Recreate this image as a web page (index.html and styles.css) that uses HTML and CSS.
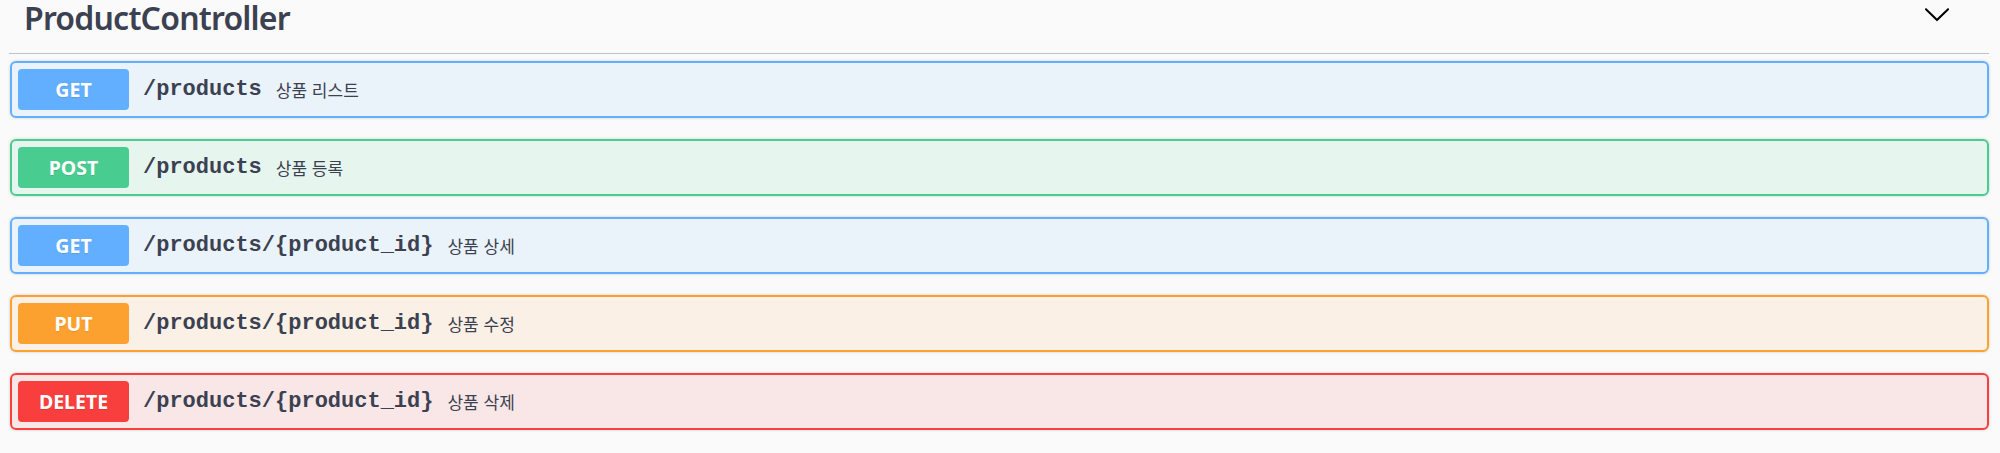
FILE: index.html
```html
<!DOCTYPE html>
<html lang="ko">
<head>
<meta charset="utf-8">
<title>ProductController</title>
<link rel="stylesheet" href="styles.css">
</head>
<body>
<section class="tag-section">
  <div class="tag-header">
    <h3 class="tag-title">ProductController</h3>
    <button class="expand" aria-label="collapse">
      <svg width="28" height="28" viewBox="0 0 20 20"><path d="M17.418 6.109c.272-.268.709-.268.979 0s.271.701 0 .969l-7.908 7.830c-.27.268-.707.268-.979 0l-7.908-7.830c-.27-.268-.27-.701 0-.969.271-.268.709-.268.979 0L10 13.25l7.418-7.141z"/></svg>
    </button>
  </div>
  <div class="ops">
    <div class="op op-get">
      <span class="method">GET</span>
      <span class="path">/products</span>
      <span class="desc">상품 리스트</span>
    </div>
    <div class="op op-post">
      <span class="method">POST</span>
      <span class="path">/products</span>
      <span class="desc">상품 등록</span>
    </div>
    <div class="op op-get">
      <span class="method">GET</span>
      <span class="path">/products/{product_id}</span>
      <span class="desc">상품 상세</span>
    </div>
    <div class="op op-put">
      <span class="method">PUT</span>
      <span class="path">/products/{product_id}</span>
      <span class="desc">상품 수정</span>
    </div>
    <div class="op op-delete">
      <span class="method">DELETE</span>
      <span class="path">/products/{product_id}</span>
      <span class="desc">상품 삭제</span>
    </div>
  </div>
</section>
</body>
</html>
```
FILE: styles.css
```css
html, body {
  margin: 0;
  padding: 0;
  background: #fafafa;
}
body {
  font-family: "Noto Sans", "Noto Sans CJK KR", sans-serif;
  color: #3b4151;
}
.tag-section {
  padding: 0 11px 0 9px;
}
.tag-header {
  display: flex;
  align-items: flex-start;
  justify-content: space-between;
  height: 53px;
  border-bottom: 1px solid rgba(59, 65, 81, 0.3);
}
.tag-title {
  margin: 0;
  padding: 1px 0 0 15px;
  font-size: 32px;
  line-height: 34px;
  font-weight: 600;
  letter-spacing: -0.8px;
  color: #3b4151;
}
.expand {
  border: 0;
  background: none;
  padding: 0;
  margin: 0 38px 0 0;
  width: 28px;
  height: 28px;
  display: block;
}
.expand svg {
  display: block;
  fill: #000;
}
.ops {
  padding-top: 7px;
  padding-left: 1px;
}
.op {
  display: flex;
  align-items: center;
  height: 57px;
  box-sizing: border-box;
  padding: 0 6px;
  border: 2px solid;
  border-radius: 6px;
  margin-bottom: 21px;
  box-shadow: 0 0 3px rgba(0, 0, 0, 0.19);
}
.method {
  width: 111px;
  height: 41px;
  border-radius: 4px;
  display: flex;
  align-items: center;
  justify-content: center;
  color: #fff;
  font-family: "Noto Sans", sans-serif;
  font-weight: 700;
  font-size: 19.5px;
  text-shadow: 0 1px 0 rgba(0, 0, 0, 0.1);
}
.path {
  padding: 0 14px;
  font-family: "Liberation Mono", "Courier New", monospace;
  font-weight: 700;
  font-size: 22px;
  color: #3b4151;
}
.desc {
  font-family: "Noto Sans CJK KR", "Noto Sans", sans-serif;
  font-size: 17px;
  color: #3b4151;
}
.op-get { background: rgba(97, 175, 254, 0.1); border-color: #61affe; }
.op-get .method { background: #61affe; }
.op-post { background: rgba(73, 204, 144, 0.1); border-color: #49cc90; }
.op-post .method { background: #49cc90; }
.op-put { background: rgba(252, 161, 48, 0.1); border-color: #fca130; }
.op-put .method { background: #fca130; }
.op-delete { background: rgba(249, 62, 62, 0.1); border-color: #f93e3e; }
.op-delete .method { background: #f93e3e; }
```
